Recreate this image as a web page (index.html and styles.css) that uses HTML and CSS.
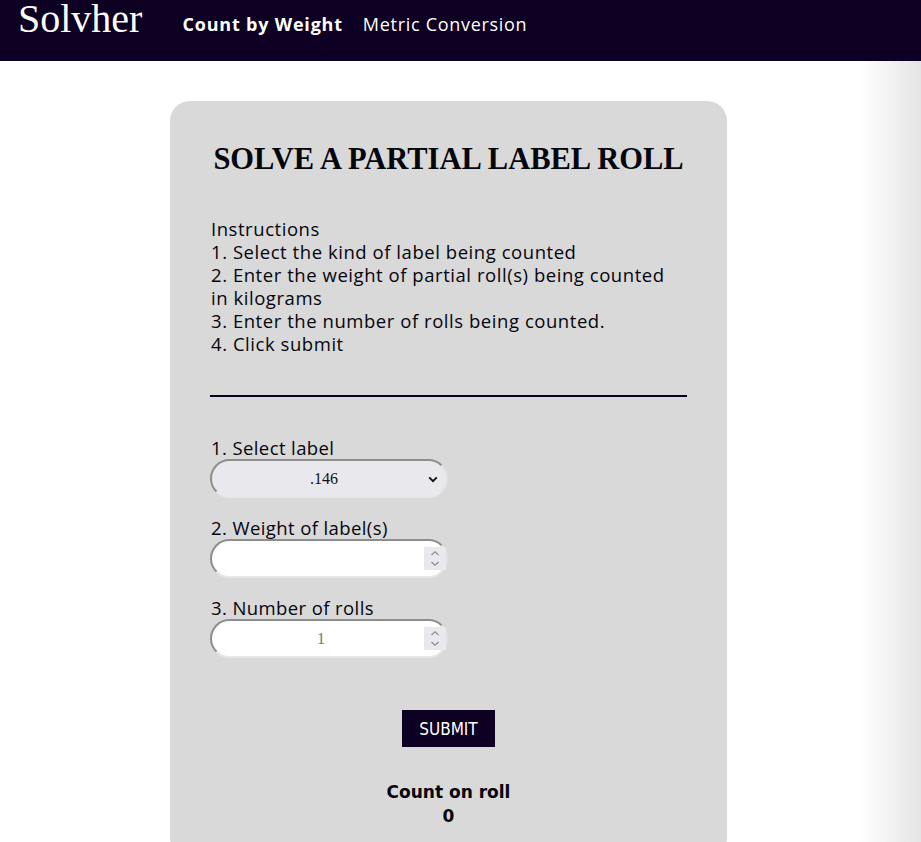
FILE: index.html
```html
<!DOCTYPE html>
<html>
<head>
<meta charset="utf-8">
<link rel="stylesheet" href="styles.css">
</head>
<body>
<header class="topbar">
  <div class="brand">Solvher</div>
  <nav class="nav">
    <a class="nav-link active">Count by Weight</a>
    <a class="nav-link">Metric Conversion</a>
  </nav>
</header>
<main class="main">
  <section class="card">
    <h1 class="title">SOLVE A PARTIAL LABEL ROLL</h1>
    <div class="instructions">
      <div>Instructions</div>
      <div>1. Select the kind of label being counted</div>
      <div>2. Enter the weight of partial roll(s) being counted in kilograms</div>
      <div>3. Enter the number of rolls being counted.</div>
      <div>4. Click submit</div>
    </div>
    <hr class="divider">
    <form class="form">
      <label class="field">
        <span class="field-label">1. Select label</span>
        <span class="control-wrap">
          <select class="control select">
            <option>.146</option>
          </select>
          <svg class="select-arrow" width="10" height="7" viewBox="0 0 10 7"><path d="M1.2 1.3 L5 5.1 L8.8 1.3" fill="none" stroke="#111" stroke-width="1.9"/></svg>
        </span>
      </label>
      <label class="field">
        <span class="field-label">2. Weight of label(s)</span>
        <span class="control-wrap">
          <input class="control" type="number">
          <svg class="spinner" width="22" height="23" viewBox="0 0 22 23"><rect width="22" height="23" fill="#e9e9ed"/><path d="M7.5 8 L11 4.8 L14.5 8" fill="none" stroke="#8e8e99" stroke-width="1.3"/><path d="M7.5 15 L11 18.2 L14.5 15" fill="none" stroke="#8e8e99" stroke-width="1.3"/></svg>
        </span>
      </label>
      <label class="field">
        <span class="field-label">3. Number of rolls</span>
        <span class="control-wrap">
          <input class="control" type="number" placeholder="1">
          <svg class="spinner" width="22" height="23" viewBox="0 0 22 23"><rect width="22" height="23" fill="#e9e9ed"/><path d="M7.5 8 L11 4.8 L14.5 8" fill="none" stroke="#8e8e99" stroke-width="1.3"/><path d="M7.5 15 L11 18.2 L14.5 15" fill="none" stroke="#8e8e99" stroke-width="1.3"/></svg>
        </span>
      </label>
      <div class="actions">
        <button type="button" class="submit">SUBMIT</button>
      </div>
    </form>
    <div class="result">
      <div>Count on roll</div>
      <div>0</div>
    </div>
  </section>
</main>
<div class="edge-shade"></div>
</body>
</html>
```
FILE: styles.css
```css
html, body {
  margin: 0;
  padding: 0;
  background: #ffffff;
}
body {
  font-family: "Open Sans", "Liberation Sans", sans-serif;
  color: #05050c;
}
.topbar {
  height: 61px;
  background: #0e0022;
  display: flex;
  align-items: flex-start;
  padding-left: 18px;
}
.brand {
  font-family: "Liberation Serif", serif;
  font-size: 40px;
  color: #ffffff;
  line-height: 36px;
  padding-top: 1px;
}
.nav {
  display: flex;
  gap: 20px;
  margin-left: 40px;
  margin-top: 12px;
}
.nav-link {
  color: #ffffff;
  font-size: 18px;
  line-height: 24px;
  letter-spacing: 0.7px;
}
.nav-link.active {
  font-weight: 700;
  letter-spacing: 0.8px;
}
.main {
  display: flex;
  padding-top: 40px;
  padding-left: 170px;
}
.card {
  width: 477px;
  background: #d9d9d9;
  border-radius: 20px;
  padding: 38px 40px 30px;
}
.title {
  font-family: "Liberation Serif", serif;
  font-weight: 700;
  font-size: 30.5px;
  text-align: center;
  margin: 0 0 38px;
  line-height: 40px;
}
.instructions {
  font-size: 18.5px;
  line-height: 23px;
  letter-spacing: 0.55px;
  padding-left: 1px;
}
.divider {
  border: none;
  border-top: 2px solid #0e0022;
  margin: 40px 0 0;
}
.form {
  display: flex;
  flex-direction: column;
  margin-top: 40px;
}
.field {
  display: flex;
  flex-direction: column;
  align-items: flex-start;
  margin-bottom: 19px;
}
.field-label {
  font-size: 18.5px;
  line-height: 22px;
  letter-spacing: 0.4px;
  padding-left: 1px;
}
.control-wrap {
  position: relative;
  display: block;
  width: 238px;
  height: 39px;
}
.control {
  display: block;
  width: 238px;
  height: 39px;
  box-sizing: border-box;
  border-radius: 20px;
  border-style: solid;
  border-width: 2px;
  border-color: #8d8d8d #e2e2e2 #e8e8e8 #8d8d8d;
  background: #ffffff;
  font-family: "Liberation Serif", serif;
  font-size: 16px;
  text-align: center;
  color: #111;
  padding: 0 26px 0 10px;
  outline: none;
  -webkit-appearance: none;
  appearance: none;
  -moz-appearance: textfield;
}
.control::placeholder {
  color: #767676;
}
.control::-webkit-inner-spin-button,
.control::-webkit-outer-spin-button {
  -webkit-appearance: none;
  margin: 0;
}
.select {
  background: #e9e9ed;
  text-align-last: center;
  padding: 0 20px 0 10px;
}
.select-arrow {
  position: absolute;
  right: 10px;
  top: 17px;
  pointer-events: none;
}
.spinner {
  position: absolute;
  right: 2px;
  top: 8px;
  pointer-events: none;
}
.actions {
  display: flex;
  justify-content: center;
  margin-top: 33px;
}
.submit {
  background: #0e0022;
  color: #ffffff;
  border: none;
  font-family: "DejaVu Sans Condensed", "DejaVu Sans", sans-serif;
  font-size: 17px;
  width: 93px;
  height: 37px;
  padding: 0;
}
.result {
  text-align: center;
  font-family: "DejaVu Sans", sans-serif;
  font-weight: 700;
  font-size: 17px;
  line-height: 24px;
  margin-top: 33px;
}
.edge-shade {
  position: fixed;
  top: 61px;
  right: 0;
  bottom: 0;
  width: 60px;
  background: linear-gradient(to right, rgba(235,235,235,0), rgba(225,225,225,0.9));
  pointer-events: none;
}
```
